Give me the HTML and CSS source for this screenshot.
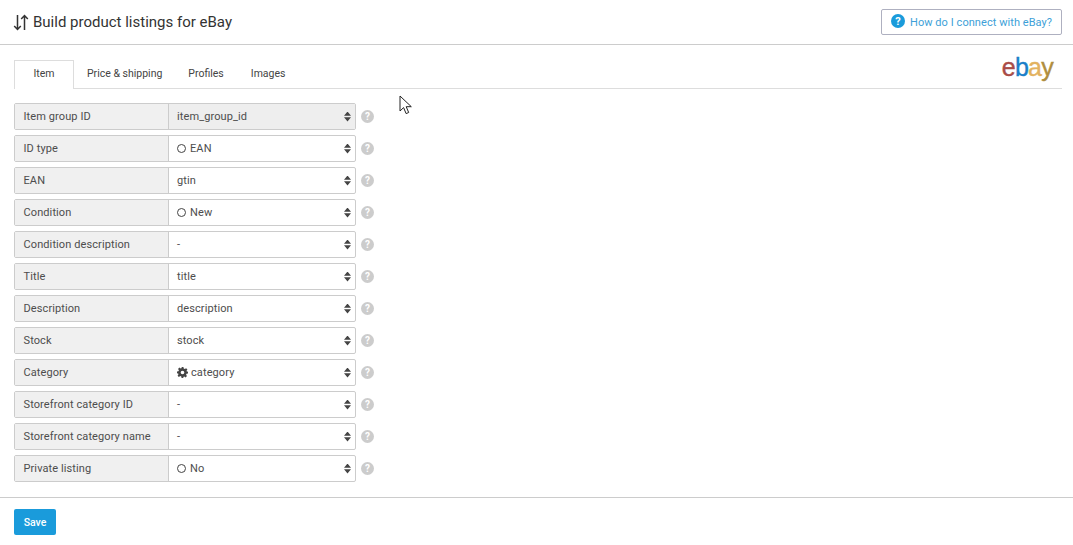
FILE: index.html
```html
<!DOCTYPE html>
<html lang="en">
<head>
    <meta charset="UTF-8">
    <title>Build product listings for eBay</title>
    <link rel="stylesheet" href="styles.css">
</head>
<body>

    <header class="top">
        <h1 class="title">
            <svg class="sort-icon" width="16" height="17" viewBox="0 0 16 17"><path d="M4.5 1v14.5M1.2 12l3.3 3.5L7.8 12M11.5 16V1.5M8.2 5l3.3-3.5L14.8 5" fill="none" stroke="#333" stroke-width="1.5"/></svg>
            Build product listings for eBay
        </h1>
        <a class="connect">
            <svg class="connect-icon" width="14" height="14" viewBox="0 0 14 14"><circle cx="7" cy="7" r="7" fill="#1a9bdb"/><text x="7" y="11" text-anchor="middle" class="q-mark">?</text></svg>
            How do I connect with eBay?
        </a>
    </header>

    <div class="content">
        <div class="tabs">
            <div class="tab active">Item</div>
            <div class="tab">Price &amp; shipping</div>
            <div class="tab">Profiles</div>
            <div class="tab">Images</div>
            <div class="logo"><span class="e">e</span><span class="b">b</span><span class="a">a</span><span class="y">y</span></div>
        </div>

        <div class="rows">
            <div class="row">
                <div class="field"><div class="label">Item group ID</div><div class="select disabled"><span>item_group_id</span><i class="caret"></i></div></div>
                <span class="help">?</span>
            </div>
            <div class="row">
                <div class="field"><div class="label">ID type</div><div class="select"><i class="ring"></i><span>EAN</span><i class="caret"></i></div></div>
                <span class="help">?</span>
            </div>
            <div class="row">
                <div class="field"><div class="label">EAN</div><div class="select"><span>gtin</span><i class="caret"></i></div></div>
                <span class="help">?</span>
            </div>
            <div class="row">
                <div class="field"><div class="label">Condition</div><div class="select"><i class="ring"></i><span>New</span><i class="caret"></i></div></div>
                <span class="help">?</span>
            </div>
            <div class="row">
                <div class="field"><div class="label">Condition description</div><div class="select"><span>-</span><i class="caret"></i></div></div>
                <span class="help">?</span>
            </div>
            <div class="row">
                <div class="field"><div class="label">Title</div><div class="select"><span>title</span><i class="caret"></i></div></div>
                <span class="help">?</span>
            </div>
            <div class="row">
                <div class="field"><div class="label">Description</div><div class="select"><span>description</span><i class="caret"></i></div></div>
                <span class="help">?</span>
            </div>
            <div class="row">
                <div class="field"><div class="label">Stock</div><div class="select"><span>stock</span><i class="caret"></i></div></div>
                <span class="help">?</span>
            </div>
            <div class="row">
                <div class="field"><div class="label">Category</div><div class="select">
                    <svg class="cog" width="11" height="11" viewBox="0 0 24 24"><path fill="#444" fill-rule="evenodd" d="M10 0h4l.7 3.4 2.3 1 2.9-1.9 2.8 2.8-1.9 2.9 1 2.3L24 10v4l-3.2.7-1 2.3 1.9 2.9-2.8 2.8-2.9-1.9-2.3 1L14 24h-4l-.7-3.2-2.3-1-2.9 1.9-2.8-2.8 1.9-2.9-1-2.3L0 14v-4l3.2-.7 1-2.3-1.9-2.9 2.8-2.8 2.9 1.9 2.3-1zM12 8a4 4 0 1 0 0 8 4 4 0 0 0 0-8z"/></svg>
                    <span>category</span><i class="caret"></i></div></div>
                <span class="help">?</span>
            </div>
            <div class="row">
                <div class="field"><div class="label">Storefront category ID</div><div class="select"><span>-</span><i class="caret"></i></div></div>
                <span class="help">?</span>
            </div>
            <div class="row">
                <div class="field"><div class="label">Storefront category name</div><div class="select"><span>-</span><i class="caret"></i></div></div>
                <span class="help">?</span>
            </div>
            <div class="row">
                <div class="field"><div class="label">Private listing</div><div class="select"><i class="ring"></i><span>No</span><i class="caret"></i></div></div>
                <span class="help">?</span>
            </div>
        </div>
    </div>

    <footer class="bottom">
        <button class="save">Save</button>
    </footer>

    <svg class="cursor" width="14" height="20" viewBox="0 0 14 20"><path d="M1 1v15l3.6-3.4 2.5 6 2.6-1.1-2.5-5.8h5.1z" fill="#fff" stroke="#222" stroke-width="1"/></svg>

</body>
</html>
```

FILE: styles.css
```css
body {
    margin: 0; height: 545px; overflow: hidden;
    background: #fff; color: #4d4d4d;
    font-family: Roboto, sans-serif; font-size: 11px;
    position: relative;
}

/* Header */
.top {
    height: 45px; box-sizing: border-box;
    border-bottom: 1px solid #ccc;
    display: flex; justify-content: space-between; align-items: center;
    padding: 0 11px 0 13px;
}
.title {
    margin: 0; font-size: 15px; font-weight: 400; color: #333;
    display: flex; align-items: center; gap: 4px;
}
.connect {
    height: 26px; box-sizing: border-box; width: 181px;
    border: 1px solid #aeb0c0; border-radius: 2px;
    display: flex; align-items: center; gap: 5px; padding-left: 9px;
    color: #3d9fd8; font-size: 11px; letter-spacing: 0.06px;
}
.connect-icon { margin-top: -2px; }
.q-mark { font: 700 11px Roboto, sans-serif; fill: #fff; }

/* Tabs */
.content { padding: 15px 11px 0 14px; }
.tabs {
    height: 29px; box-sizing: border-box;
    border-bottom: 1px solid #ddd;
    display: flex; position: relative;
}
.tab {
    height: 29px; box-sizing: border-box; padding: 0 13px 2px;
    display: flex; align-items: center; color: #444;
    font-size: 10.5px;
}
.tab:nth-child(4) { margin-left: 1px; }
.tab.active {
    width: 60px; justify-content: center; padding: 0 0 3px;
    background: #fff;
    border: 1px solid #ddd; border-bottom: none;
}
.logo {
    position: absolute; right: 9px; top: -8px;
    font-family: "Liberation Sans", sans-serif; font-size: 25px;
    letter-spacing: -0.75px; line-height: 30px;
    -webkit-text-stroke: 0.4px;
}
.e { color: #a94c47; }
.b { color: #1a7fc9; }
.a { color: #e3b25f; }
.y { color: #b08e3e; }

/* Rows */
.rows { margin-top: 14px; display: flex; flex-direction: column; gap: 5px; }
.row { display: flex; align-items: center; gap: 5px; }
.field {
    width: 342px; height: 27px; box-sizing: border-box;
    border: 1px solid #ccc; border-radius: 2px;
    display: flex;
}
.label {
    width: 154px; box-sizing: border-box; padding-left: 8.5px;
    background: #f0f0f0; border-right: 1px solid #ccc;
    display: flex; align-items: center; letter-spacing: 0.1px;
}
.select {
    flex: 1; display: flex; align-items: center; padding: 0 4px 0 8px;
    letter-spacing: 0.1px;
}
.select.disabled { background: #eee; }
.ring {
    width: 7px; height: 7px; border: 1.5px solid #444; border-radius: 50%;
    margin-right: 4px;
}
.cog { margin-right: 3px; }
.caret {
    margin-left: auto; width: 7px; height: 10px;
    background: #444;
    clip-path: polygon(50% 0, 100% 42%, 0 42%, 50% 0, 0 58%, 100% 58%, 50% 100%, 0 58%);
}
.help {
    width: 13px; height: 13px; border-radius: 50%; margin-bottom: 1px;
    background: #ccc; color: #fff; font-weight: 700; font-size: 10px;
    display: flex; align-items: center; justify-content: center;
}

/* Footer */
.bottom {
    margin-top: 15px; border-top: 1px solid #ccc; padding: 11px 14px 0;
}
.save {
    width: 42px; height: 26px; padding: 0;
    background: #1a9bdb; color: #fff; border: none; border-radius: 2px;
    font: 500 10.5px Roboto, sans-serif;
}

.cursor { position: absolute; left: 399px; top: 95px; }
```
